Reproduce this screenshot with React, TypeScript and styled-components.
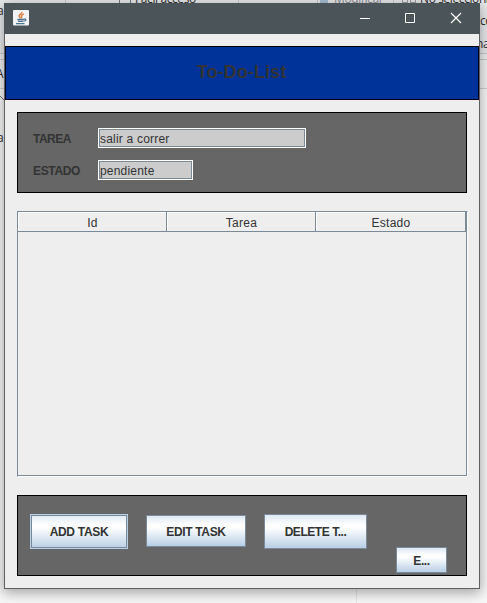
import React from "react";
import styled, { createGlobalStyle } from "styled-components";

const Global = createGlobalStyle`
  * { box-sizing: border-box; }
  html, body { margin: 0; padding: 0; overflow: hidden; }
  body { font-family: "Liberation Sans", Arial, sans-serif; font-size: 12px; color: #333; }
`;

const Desktop = styled.div`
  position: relative;
  width: 487px;
  height: 603px;
  overflow: hidden;
  background: linear-gradient(#e9eaec 0 53px, #c9cacb 53px 54px, #eeeff0 54px 59px,
    #c9cacb 59px 60px, #f1f1f1 60px 88px, #d0d0d0 88px 89px, #f8f8f8 89px);
  padding: 3px 7px 14px 4px;
`;

const Behind = styled.span<{ $x: number; $y: number; $c?: string }>`
  position: absolute;
  left: ${(p) => p.$x}px;
  top: ${(p) => p.$y}px;
  font: 12px/16px "Open Sans", "Noto Sans", sans-serif;
  letter-spacing: -0.4px;
  color: ${(p) => p.$c ?? "#303030"};
  white-space: nowrap;
`;

const BehindArt = styled.svg`
  position: absolute;
  left: 0;
  top: 0;
`;

const Window = styled.main`
  position: relative;
  width: 476px;
  height: 586px;
  display: flex;
  flex-direction: column;
  background: #eee;
  border: 1px solid #5d6163;
  border-top: 0;
  box-shadow: 0 3px 12px 1px rgba(0, 0, 0, 0.34);
`;

const TitleBar = styled.header`
  height: 31px;
  margin: 0 -1px;
  flex: none;
  display: flex;
  justify-content: space-between;
  background: #4b5459;
  padding: 0 4px 0 9px;
`;

const AppIcon = styled.svg`
  margin-top: 7px;
`;

const WindowControls = styled.svg`
  display: block;
`;

const Banner = styled.div`
  margin-top: 12px;
  height: 54px;
  flex: none;
  display: flex;
  justify-content: center;
  background: #003399;
  border: 1px solid #00001a;
  border-top-color: #000;
`;

const Heading = styled.h1`
  margin: 0;
  padding: 15px 1px 0 0;
  font-size: 18px;
  line-height: 21px;
  font-weight: bold;
  letter-spacing: 0.1px;
  color: #333;
`;

const Panel = styled.section`
  margin: 0 12px;
  height: 81px;
  flex: none;
  background: #666;
  border: 1px solid #000;
`;

const FormPanel = styled(Panel)`
  margin-top: 12px;
  padding: 15px 0 0 15px;
  display: flex;
  flex-direction: column;
  gap: 12px;
`;

const Field = styled.label`
  display: grid;
  grid-template-columns: 65px auto;
  justify-content: start;
  height: 20px;
  line-height: 23px;
`;

const FieldName = styled.span<{ $track: number }>`
  font-weight: bold;
  letter-spacing: ${(p) => p.$track}px;
`;

const Input = styled.span<{ $w: number; $track: number }>`
  width: ${(p) => p.$w}px;
  height: 20px;
  background: #ccc;
  border: 1px solid #fff;
  box-shadow: inset 0 0 0 1px #7a8a99;
  padding-left: 1px;
  line-height: 21px;
  letter-spacing: ${(p) => p.$track}px;
  white-space: nowrap;
`;

const Table = styled.section`
  margin: 18px 11px 0 12px;
  height: 266px;
  flex: none;
  border: 1px solid #7a8a99;
  border-right-color: #fff;
  border-bottom-color: #fff;
  box-shadow: inset -1px -1px 0 #7a8a99;
`;

const TableHead = styled.div`
  display: grid;
  grid-template-columns: 149px 149px 150px;
  grid-template-rows: 20px;
  height: 20px;
`;

const HeadCell = styled.div<{ $track: number }>`
  border-right: 1px solid #7a8a99;
  border-bottom: 1px solid #7a8a99;
  box-shadow: inset 1px 1px 0 #fff;
  padding-left: 1px;
  text-align: center;
  line-height: 23px;
  letter-spacing: ${(p) => p.$track}px;
`;

const ActionPanel = styled(Panel)`
  margin-top: 18px;
  display: flex;
  align-items: flex-start;
  padding-left: 12px;
`;

const Button = styled.button<{ $w: number; $h: number; $top: number; $left: number; $focus?: boolean; $track: number }>`
  width: ${(p) => p.$w}px;
  height: ${(p) => p.$h}px;
  margin: ${(p) => p.$top}px 0 0 ${(p) => p.$left}px;
  padding: 1px 0 0;
  flex: none;
  font: bold 12px/14px "Liberation Sans", Arial, sans-serif;
  letter-spacing: ${(p) => p.$track}px;
  color: #333;
  border: 1px solid ${(p) => (p.$focus ? "#b8cfe5" : "#7a8a99")};
  box-shadow: ${(p) => (p.$focus ? "inset 0 0 0 1px #7a8a99" : "none")};
  background: linear-gradient(#dde8f3 0%, #fff 30%, #fff 38%, #b8cfe5 100%);
`;

const fields = [
  { name: "TAREA", value: "salir a correr", width: 208, track: -0.5, valueTrack: 0.2 },
  { name: "ESTADO", value: "pendiente", width: 95, track: -0.35, valueTrack: 0.2 },
];

const columns = [
  { name: "Id", track: 0.3 },
  { name: "Tarea", track: 0.3 },
  { name: "Estado", track: 0.3 },
];

const actions = [
  { name: "ADD TASK", w: 98, h: 35, top: 18, left: 0, focus: true, track: -0.3 },
  { name: "EDIT TASK", w: 100, h: 32, top: 19, left: 18, track: -0.35 },
  { name: "DELETE T...", w: 103, h: 35, top: 18, left: 18, track: -0.45 },
  { name: "E...", w: 51, h: 26, top: 51, left: 29, track: -0.4 },
];

export default function App() {
  return (
    <>
      <Global />
      <Desktop>
        <Behind $x={135} $y={-9}>Fácil acceso</Behind>
        <Behind $x={334} $y={-9} $c="#8a8d92">Modificar</Behind>
        <Behind $x={420} $y={-9}>No seleccionar</Behind>
        <Behind $x={480} $y={13}>co</Behind>
        <Behind $x={476} $y={36}>nar</Behind>
        <Behind $x={-3} $y={3}>a</Behind>
        <Behind $x={-4} $y={66}>A</Behind>
        <Behind $x={-3} $y={130}>a</Behind>
        <BehindArt width="487" height="603" fill="none">
          <path d="M65.5 0v3M238.5 0v3M317.5 0v3M393.5 0v3" stroke="#c4c8cc" />
          <path d="M119.5 0v3M130.5 0v3" stroke="#777" />
          <path d="M320 0h8v3h-8z" fill="#a9bfd5" />
          <path d="M402.5 0v2.500h5V0M410.500 0v2.500h5V0" stroke="#999" />
          <path d="M0 96l4 4" stroke="#777" />
          <path d="M356.500 589v14" stroke="#e5e5e5" />
        </BehindArt>
        <Window>
          <TitleBar>
            <AppIcon width="16" height="16" viewBox="0 0 16 16" fill="none">
              <rect width="16" height="15.500" rx="1" fill="#f1f3f4" />
              <path d="M8.800 1.800c1 1.800-3.300 2.700-2.800 4.300.2.800 1.200 1.300 1.400 2.200M10.800 4c-2 .7-3 1.500-2.200 2.600.6.800.2 1.200-.4 1.700" stroke="#e07a3a" strokeWidth="1.400" />
              <path d="M4.300 9.500h6.700M5 11.300h5.500M3 13.700h8.500M11 9.200c2.500-.7 2.300 1.500.2 2" stroke="#4d7391" strokeWidth="1.300" />
            </AppIcon>
            <WindowControls width="132" height="31" fill="none" stroke="#fff">
              <path d="M16 15.500h10M61.500 10.500h9v9h-9z" />
              <path d="M107 10l10 10M117 10l-10 10" strokeWidth="1.200" />
            </WindowControls>
          </TitleBar>
          <Banner>
            <Heading>To-Do-List</Heading>
          </Banner>
          <FormPanel>
            {fields.map((f) => (
              <Field key={f.name}>
                <FieldName $track={f.track}>{f.name}</FieldName>
                <Input $w={f.width} $track={f.valueTrack}>{f.value}</Input>
              </Field>
            ))}
          </FormPanel>
          <Table>
            <TableHead>
              {columns.map((c) => (
                <HeadCell key={c.name} $track={c.track}>{c.name}</HeadCell>
              ))}
            </TableHead>
          </Table>
          <ActionPanel>
            {actions.map((a) => (
              <Button key={a.name} $w={a.w} $h={a.h} $top={a.top} $left={a.left} $focus={a.focus} $track={a.track}>
                {a.name}
              </Button>
            ))}
          </ActionPanel>
        </Window>
      </Desktop>
    </>
  );
}
